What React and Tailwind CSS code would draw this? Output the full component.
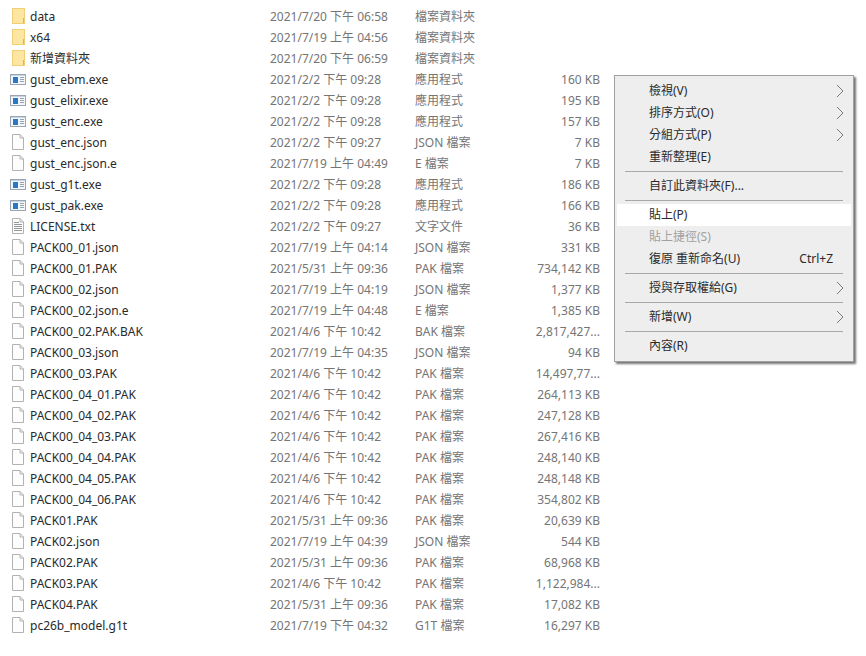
import React from 'react';

const FONT = '"Noto Sans", "Noto Sans CJK TC", sans-serif';

const FOLDER = '檔案資料夾';
const APP = '應用程式';
const JSON_T = 'JSON 檔案';
const PAK = 'PAK 檔案';

const files = [
  ['data', '2021/7/20 下午 06:58', FOLDER, '', 'folder'],
  ['x64', '2021/7/19 上午 04:56', FOLDER, '', 'folder'],
  ['新增資料夾', '2021/7/20 下午 06:59', FOLDER, '', 'folder'],
  ['gust_ebm.exe', '2021/2/2 下午 09:28', APP, '160 KB', 'exe'],
  ['gust_elixir.exe', '2021/2/2 下午 09:28', APP, '195 KB', 'exe'],
  ['gust_enc.exe', '2021/2/2 下午 09:28', APP, '157 KB', 'exe'],
  ['gust_enc.json', '2021/2/2 下午 09:27', JSON_T, '7 KB', 'doc'],
  ['gust_enc.json.e', '2021/7/19 上午 04:49', 'E 檔案', '7 KB', 'doc'],
  ['gust_g1t.exe', '2021/2/2 下午 09:28', APP, '186 KB', 'exe'],
  ['gust_pak.exe', '2021/2/2 下午 09:28', APP, '166 KB', 'exe'],
  ['LICENSE.txt', '2021/2/2 下午 09:27', '文字文件', '36 KB', 'txt'],
  ['PACK00_01.json', '2021/7/19 上午 04:14', JSON_T, '331 KB', 'doc'],
  ['PACK00_01.PAK', '2021/5/31 上午 09:36', PAK, '734,142 KB', 'doc'],
  ['PACK00_02.json', '2021/7/19 上午 04:19', JSON_T, '1,377 KB', 'doc'],
  ['PACK00_02.json.e', '2021/7/19 上午 04:48', 'E 檔案', '1,385 KB', 'doc'],
  ['PACK00_02.PAK.BAK', '2021/4/6 下午 10:42', 'BAK 檔案', '2,817,427...', 'doc'],
  ['PACK00_03.json', '2021/7/19 上午 04:35', JSON_T, '94 KB', 'doc'],
  ['PACK00_03.PAK', '2021/4/6 下午 10:42', PAK, '14,497,77...', 'doc'],
  ['PACK00_04_01.PAK', '2021/4/6 下午 10:42', PAK, '264,113 KB', 'doc'],
  ['PACK00_04_02.PAK', '2021/4/6 下午 10:42', PAK, '247,128 KB', 'doc'],
  ['PACK00_04_03.PAK', '2021/4/6 下午 10:42', PAK, '267,416 KB', 'doc'],
  ['PACK00_04_04.PAK', '2021/4/6 下午 10:42', PAK, '248,140 KB', 'doc'],
  ['PACK00_04_05.PAK', '2021/4/6 下午 10:42', PAK, '248,148 KB', 'doc'],
  ['PACK00_04_06.PAK', '2021/4/6 下午 10:42', PAK, '354,802 KB', 'doc'],
  ['PACK01.PAK', '2021/5/31 上午 09:36', PAK, '20,639 KB', 'doc'],
  ['PACK02.json', '2021/7/19 上午 04:39', JSON_T, '544 KB', 'doc'],
  ['PACK02.PAK', '2021/5/31 上午 09:36', PAK, '68,968 KB', 'doc'],
  ['PACK03.PAK', '2021/4/6 下午 10:42', PAK, '1,122,984...', 'doc'],
  ['PACK04.PAK', '2021/5/31 上午 09:36', PAK, '17,082 KB', 'doc'],
  ['pc26b_model.g1t', '2021/7/19 下午 04:32', 'G1T 檔案', '16,297 KB', 'doc'],
];

const FileIcon = ({ type }) => {
  if (type === 'folder') {
    return (
      <svg width="16" height="16" viewBox="0 0 16 16" shapeRendering="crispEdges">
        <rect x="2" y="0" width="13" height="16" fill="#f0cf75" />
        <rect x="3" y="1" width="11" height="14" fill="#fde6a2" />
        <rect x="13" y="10" width="1" height="5" fill="#d8b45a" />
      </svg>
    );
  }
  if (type === 'exe') {
    return (
      <svg width="16" height="16" viewBox="0 0 16 16" shapeRendering="crispEdges">
        <rect x="0.5" y="3.5" width="15" height="10" fill="#f3f6fa" stroke="#9aa5b1" />
        <rect x="1" y="4" width="14" height="1" fill="#c4d5e8" />
        <rect x="3" y="6" width="5" height="6" fill="#2a78c4" />
        <path d="M10 6.5h4M10 8.5h4M10 10.5h4" stroke="#9aa3ad" />
      </svg>
    );
  }
  return (
    <svg width="16" height="16" viewBox="0 0 16 16">
      <path d="M2.5 0.5h7.5l3.5 3.5v11.5h-11z" fill="#fdfdfd" stroke="#b2b2b2" />
      <path d="M10 0.5v3.5h3.5" fill="none" stroke="#b2b2b2" />
      {type === 'txt' && <path d="M4 4.5h5M4 6.5h8M4 8.5h8M4 10.5h8M4 12.5h8" stroke="#969696" shapeRendering="crispEdges" />}
    </svg>
  );
};

const Chevron = () => (
  <svg width="8" height="14" viewBox="0 0 8 14" className="absolute left-[219px] top-[4px]">
    <path d="M1 1l6 6-6 6" fill="none" stroke="#7a7a7a" />
  </svg>
);

const MenuItem = ({ label, arrow, hint, active, disabled }) => (
  <div className={`relative flex items-center justify-between h-[22px] pl-[32px] pr-[18px] ${active ? 'bg-white' : ''} ${disabled ? 'text-[#a0a0a0]' : 'text-[#2a2a2a]'}`}>
    <span>{label}</span>
    {hint && <span>{hint}</span>}
    {arrow && <Chevron />}
  </div>
);

const Sep = () => (
  <div className="h-[7px] flex items-center px-[8px]">
    <div className="h-px w-full bg-[#a8a8a8]" />
  </div>
);

export default function App() {
  return (
    <div className="relative w-[866px] h-[656px] overflow-hidden bg-white text-[12px]" style={{ fontFamily: FONT }}>
      <div className="flex flex-col pt-[6px]">
        {files.map(([name, date, kind, size, icon]) => (
          <div key={name} className="flex h-[21px] leading-[21px] whitespace-nowrap">
            <div className="w-[16px] ml-[10px] pt-[2px]">
              <FileIcon type={icon} />
            </div>
            <span className="w-[240px] ml-[4px] text-[#2a2a2a]">{name}</span>
            <span className="w-[145px] text-[#757575]">{date}</span>
            <span className="w-[85px] text-[#757575]">{kind}</span>
            <span className="w-[100px] text-right text-[#757575]">{size}</span>
          </div>
        ))}
      </div>

      <div className="absolute left-[614px] top-[75px] w-[240px] border border-[#a0a0a0] bg-[#eeeeee] py-[4px] px-[2px] shadow-[2px_2px_2px_rgba(0,0,0,0.55)]">
        <MenuItem label="檢視(V)" arrow />
        <MenuItem label="排序方式(O)" arrow />
        <MenuItem label="分組方式(P)" arrow />
        <MenuItem label="重新整理(E)" />
        <Sep />
        <MenuItem label="自訂此資料夾(F)..." />
        <Sep />
        <MenuItem label="貼上(P)" active />
        <MenuItem label="貼上捷徑(S)" disabled />
        <MenuItem label="復原 重新命名(U)" hint="Ctrl+Z" />
        <Sep />
        <MenuItem label="授與存取權給(G)" arrow />
        <Sep />
        <MenuItem label="新增(W)" arrow />
        <Sep />
        <MenuItem label="內容(R)" />
      </div>
    </div>
  );
}
